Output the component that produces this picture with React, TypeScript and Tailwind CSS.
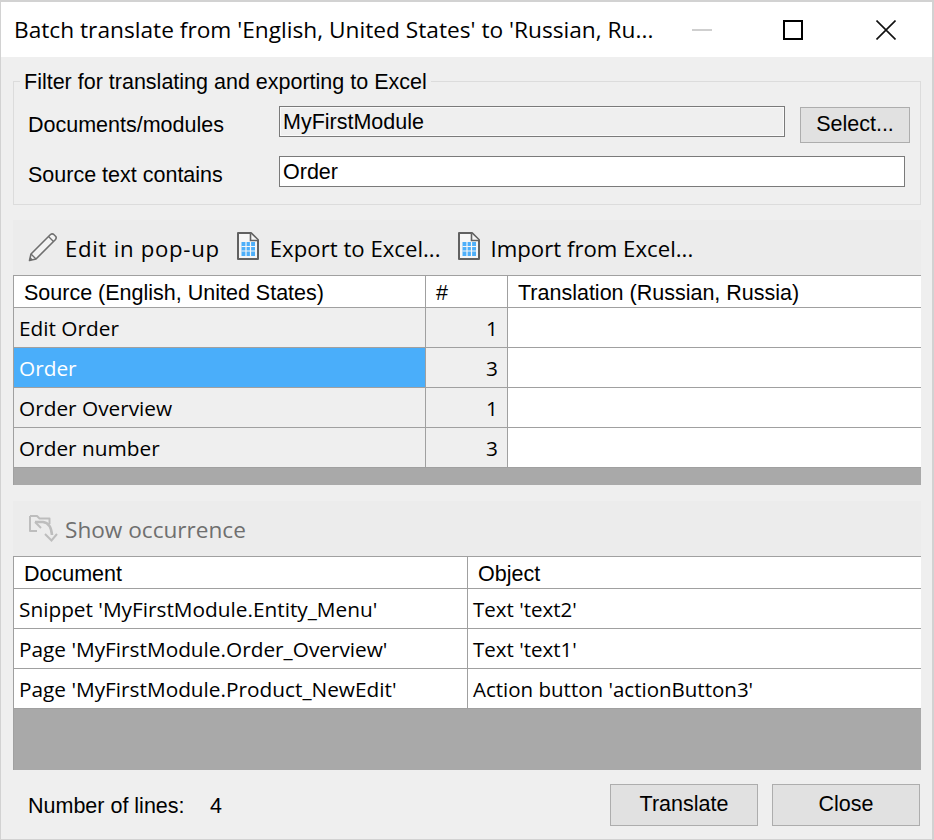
const sans = "font-['Liberation_Sans',Arial,sans-serif]";
const ui = "font-['Open_Sans','Noto_Sans',sans-serif]";

function PencilIcon() {
  return (
    <svg width="30" height="30" viewBox="0 0 30 30" fill="none" className="shrink-0 -mt-[2px]">
      <path d="M1.5 28.5 L3 22 L22.5 2.5 Q24 1.3 25.5 2.2 L27.8 4.5 Q28.8 6 27.5 7.5 L8 27 Z" fill="#f3f3f3" stroke="#6f6f6f" strokeWidth="1.6" strokeLinejoin="round" />
      <path d="M3 22 L8 27 M20.5 4.5 L25.5 9.5" stroke="#6f6f6f" strokeWidth="1.4" />
      <path d="M1.5 28.5 L2.3 25 L5 27.7 Z" fill="#6f6f6f" />
    </svg>
  );
}

function ExcelIcon() {
  return (
    <svg width="22" height="28" viewBox="0 0 22 28" fill="none" className="shrink-0 -mt-[4px]">
      <path d="M1 1 H14 L21 8 V27 H1 Z" fill="#f6f6f6" stroke="#616161" strokeWidth="2" strokeLinejoin="round" />
      <path d="M13.5 1.5 V8.5 H21" fill="#f6f6f6" stroke="#616161" strokeWidth="1.6" />
      <rect x="4.5" y="10" width="13.5" height="14" fill="#4daffa" />
      <path d="M4.5 14.5 H18 M4.5 19 H18 M9 10 V24 M13.5 10 V24" stroke="#f6f6f6" strokeWidth="1.2" />
    </svg>
  );
}

function OccurrenceIcon() {
  return (
    <svg width="30" height="30" viewBox="0 0 30 30" fill="none" className="shrink-0 -mt-[2px]">
      <path d="M2 3 H9 L11.5 5.5 H21.5 V11 M2 3 V18 H9" stroke="#bdbdbd" strokeWidth="2" strokeLinejoin="round" />
      <path d="M7 9 H15 Q23 10 24 22" stroke="#bdbdbd" strokeWidth="2.6" />
      <path d="M17 21 L23.5 27.5 L29 21" stroke="#bdbdbd" strokeWidth="2" />
      <path d="M7 9 L13 15" stroke="#bdbdbd" strokeWidth="2" />
    </svg>
  );
}

function Header({ cols, labels }: { cols: string; labels: string[] }) {
  return (
    <div className={`grid ${cols} h-[32px] bg-white border-b border-[#a0a0a0]`}>
      {labels.map((l, i) => (
        <div key={l} className={`${sans} text-[21.5px] text-black flex items-center pl-[10px] pt-[1px] ${i < labels.length - 1 ? "border-r border-[#a0a0a0]" : ""}`}>
          {l}
        </div>
      ))}
    </div>
  );
}

const sourceRows = [
  ["Edit Order", "1"],
  ["Order", "3"],
  ["Order Overview", "1"],
  ["Order number", "3"],
];

const docRows = [
  ["Snippet 'MyFirstModule.Entity_Menu'", "Text 'text2'"],
  ["Page 'MyFirstModule.Order_Overview'", "Text 'text1'"],
  ["Page 'MyFirstModule.Product_NewEdit'", "Action button 'actionButton3'"],
];

const toolText = `${ui} text-[22.2px] leading-none text-black pt-[3px]`;

export default function App() {
  return (
    <div className="w-[934px] h-[840px] bg-[#efefef] border border-[#d2d2d2] border-t-2 border-r-2 flex flex-col overflow-hidden">
      {/* Title bar */}
      <div className="h-[55px] bg-white flex items-center shrink-0">
        <div className={`${ui} text-[22.7px] text-black pl-[13px] pt-[2px] w-[660px] whitespace-nowrap`}>
          Batch translate from 'English, United States' to 'Russian, Ru...
        </div>
        <div className="w-[20px] h-[2px] bg-[#cfcfcf] ml-[31px]" />
        <div className="w-[20px] h-[20px] border-2 border-black ml-[71px]" />
        <svg width="20" height="20" viewBox="0 0 20 20" className="ml-[73px]">
          <path d="M0.5 0.5 L19.5 19.5 M19.5 0.5 L0.5 19.5" stroke="#111" strokeWidth="1.6" />
        </svg>
      </div>

      <div className="flex-1 flex flex-col pl-[12px] pr-[12px]">
        {/* Group */}
        <div className="relative mt-[24px] h-[124px] border border-[#dcdcdc] shrink-0 w-[908px]">
          <span className={`absolute left-[6px] -top-[12px] bg-[#efefef] px-[4px] ${sans} text-[21.5px] leading-[24px] text-black whitespace-nowrap`}>
            Filter for translating and exporting to Excel
          </span>
          <div className="flex items-start pt-[24px] pl-[14px] h-[74px]">
            <span className={`${sans} text-[21.5px] text-black w-[251px] leading-[38px] whitespace-nowrap`}>Documents/modules</span>
            <div className={`w-[506px] h-[31px] border border-[#7a7a7a] bg-[#efefef] pl-[3px] ${sans} text-[21.5px] leading-[30px] text-black outline outline-1 -outline-offset-2 outline-[#fafafa]`}>MyFirstModule</div>
            <div className={`ml-[15px] mt-[1px] w-[110px] h-[36px] border border-[#adadad] bg-[#e1e1e1] ${sans} text-[21.5px] text-black flex items-center justify-center pb-[2px]`}>Select...</div>
          </div>
          <div className="flex items-start pl-[14px]">
            <span className={`${sans} text-[21.5px] text-black w-[251px] leading-[38px] whitespace-nowrap`}>Source text contains</span>
            <div className={`w-[626px] h-[31px] border border-[#7a7a7a] bg-white pl-[3px] ${sans} text-[21.5px] leading-[30px] text-black`}>Order</div>
          </div>
        </div>

        {/* Toolbar 1 */}
        <div className="mt-[15px] h-[55px] w-[908px] bg-[#ececec] flex items-center pl-[15px] shrink-0">
          <PencilIcon />
          <span className={`${toolText} ml-[7px] tracking-[0.7px]`}>Edit in pop-up</span>
          <span className="ml-[17px]"><ExcelIcon /></span>
          <span className={`${toolText} ml-[11px]`}>Export to Excel...</span>
          <span className="ml-[17px]"><ExcelIcon /></span>
          <span className={`${toolText} ml-[11px]`}>Import from Excel...</span>
        </div>

        {/* Table 1 */}
        <div className="w-[908px] h-[210px] bg-[#a9a9a9] border-t border-l border-[#a0a0a0] shrink-0 flex flex-col">
          <Header cols="grid-cols-[412px_82px_1fr]" labels={["Source (English, United States)", "#", "Translation (Russian, Russia)"]} />
          {sourceRows.map(([name, count]) => {
            const selected = name === "Order";
            return (
              <div key={name} className="grid grid-cols-[412px_82px_1fr] h-[40px] border-b border-[#a0a0a0]">
                <div className={`${ui} text-[20.8px] flex items-center pl-[5px] pt-[2px] border-r border-[#a0a0a0] ${selected ? "bg-[#4aaefa] text-white" : "bg-[#efefef] text-black"}`}>{name}</div>
                <div className={`${ui} text-[20.8px] flex items-center justify-end pr-[9px] pt-[2px] bg-[#efefef] text-black border-r border-[#a0a0a0]`}>{count}</div>
                <div className="bg-white" />
              </div>
            );
          })}
        </div>

        {/* Toolbar 2 */}
        <div className="mt-[16px] h-[55px] w-[908px] bg-[#ececec] flex items-center pl-[15px] shrink-0">
          <OccurrenceIcon />
          <span className={`${ui} text-[22.6px] leading-none text-[#6f6f6f] ml-[7px] pt-[3px]`}>Show occurrence</span>
        </div>

        {/* Table 2 */}
        <div className="w-[908px] h-[214px] bg-[#a9a9a9] border-t border-l border-[#a0a0a0] shrink-0 flex flex-col">
          <Header cols="grid-cols-[454px_1fr]" labels={["Document", "Object"]} />
          {docRows.map(([doc, obj]) => (
            <div key={doc} className="grid grid-cols-[454px_1fr] h-[40px] border-b border-[#a0a0a0] bg-white">
              <div className={`${ui} text-[20.8px] text-black flex items-center pl-[5px] pt-[2px] border-r border-[#a0a0a0] whitespace-nowrap`}>{doc}</div>
              <div className={`${ui} text-[20.5px] text-black flex items-center pl-[5px] pt-[2px] whitespace-nowrap`}>{obj}</div>
            </div>
          ))}
        </div>

        {/* Footer */}
        <div className="flex items-center mt-[14px] h-[42px] w-[907px]">
          <span className={`${sans} text-[21.5px] text-black pl-[15px] w-[197px] pt-[2px] whitespace-nowrap`}>Number of lines:</span>
          <span className={`${sans} text-[21.5px] text-black pt-[2px]`}>4</span>
          <div className={`ml-auto w-[148px] h-[42px] border border-[#adadad] bg-[#e1e1e1] ${sans} text-[21.5px] text-black flex items-center justify-center pb-[2px]`}>Translate</div>
          <div className={`ml-[14px] w-[148px] h-[42px] border border-[#adadad] bg-[#e1e1e1] ${sans} text-[21.5px] text-black flex items-center justify-center pb-[2px]`}>Close</div>
        </div>
      </div>
    </div>
  );
}
